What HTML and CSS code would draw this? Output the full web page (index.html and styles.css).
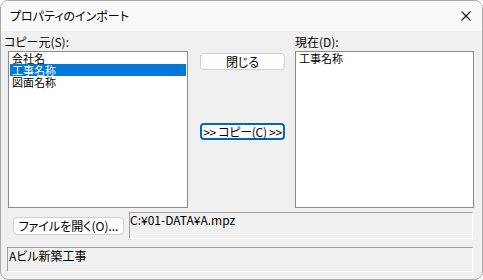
FILE: index.html
```html
<!DOCTYPE html>
<html lang="ja">
<head>
  <meta charset="UTF-8">
  <title>プロパティのインポート</title>
  <link rel="stylesheet" href="styles.css">
</head>
<body>

<div class="window">
  <div class="titlebar">
    <span class="title">プロパティのインポート</span>
    <svg class="close" width="10" height="10" viewBox="0 0 10 10">
      <path d="M0.5 0.5 L9.5 9.5 M9.5 0.5 L0.5 9.5" stroke="#111" stroke-width="1.1" fill="none"/>
    </svg>
  </div>

  <div class="content">
    <div class="columns">
      <div class="col-left">
        <div class="label">コピー元(S):</div>
        <div class="listbox src">
          <div class="item">会社名</div>
          <div class="item selected">工事名称</div>
          <div class="item">図面名称</div>
        </div>
      </div>

      <div class="col-mid">
        <button class="btn">閉じる</button>
        <button class="btn focus">&gt;&gt; コピー(C) &gt;&gt;</button>
      </div>

      <div class="col-right">
        <div class="label">現在(D):</div>
        <div class="listbox dst">
          <div class="item">工事名称</div>
        </div>
      </div>
    </div>

    <div class="file-row">
      <button class="btn open">ファイルを開く(O)...</button>
      <div class="field path">C:¥01-DATA¥A.mpz</div>
    </div>

    <div class="field project">Aビル新築工事</div>
  </div>
</div>

</body>
</html>
```

FILE: styles.css
```css
html, body {
  margin: 0;
  padding: 0;
  background-color: #fff;
}

body {
  font-family: "Noto Sans CJK JP", "Liberation Sans", sans-serif;
  font-size: 12px;
  font-feature-settings: "palt";
  color: #000;
}

.window {
  box-sizing: border-box;
  width: 483px;
  height: 280px;
  border: 1px solid #a9a9a9;
  border-radius: 8px;
  background-color: #f0f0f0;
  overflow: hidden;
}

.titlebar {
  height: 30px;
  background-color: #f9f9f9;
  display: flex;
  align-items: center;
  justify-content: space-between;
  padding: 0 11px 0 9px;
}

.title {
  font-size: 12px;
  line-height: 14px;
}

.close {
  display: block;
}

.columns {
  display: flex;
  padding: 4px 0 0 3px;
}

.label {
  line-height: 14px;
  height: 14px;
  margin-bottom: 2px;
  white-space: nowrap;
}

.col-left .listbox {
  margin-left: 4px;
  width: 180px;
}

.col-right .listbox {
  width: 179px;
}

.listbox {
  box-sizing: border-box;
  height: 157px;
  background-color: #fff;
  border: 1px solid #8a8b92;
  padding: 0 1px;
}

.item {
  height: 12px;
  line-height: 12px;
  font-size: 11px;
  padding-left: 2px;
  white-space: nowrap;
}

.item.selected {
  background-color: #0078d7;
  color: #fff;
}

.col-mid {
  display: flex;
  flex-direction: column;
  gap: 53px;
  padding-top: 18px;
  margin-left: 12px;
  margin-right: 10px;
}

.btn {
  box-sizing: border-box;
  font-family: inherit;
  font-size: 12px;
  font-feature-settings: "palt";
  color: #000;
  background-color: #fdfdfd;
  border: 1px solid #d0d0d0;
  border-radius: 4px;
  width: 85px;
  height: 17px;
  padding: 0;
  line-height: 14px;
  white-space: nowrap;
}

.btn.focus {
  border: 2px solid #0067c0;
  letter-spacing: -0.3px;
}

.file-row {
  display: flex;
  align-items: flex-start;
  margin-top: 4px;
  padding-left: 12px;
}

.btn.open {
  width: 111px;
  height: 18px;
  margin-top: 5px;
  margin-right: 5px;
}

.field {
  box-sizing: border-box;
  border-top: 1px solid #a0a0a0;
  border-left: 1px solid #a0a0a0;
  border-bottom: 1px solid #fff;
  border-right: 1px solid #fff;
  line-height: 12px;
  white-space: nowrap;
}

.path {
  width: 344px;
  height: 27px;
  padding: 1px 0 0 0;
}

.project {
  width: 466px;
  height: 25px;
  margin: 8px 0 0 6px;
  padding: 2px 0 0 1px;
}
```
